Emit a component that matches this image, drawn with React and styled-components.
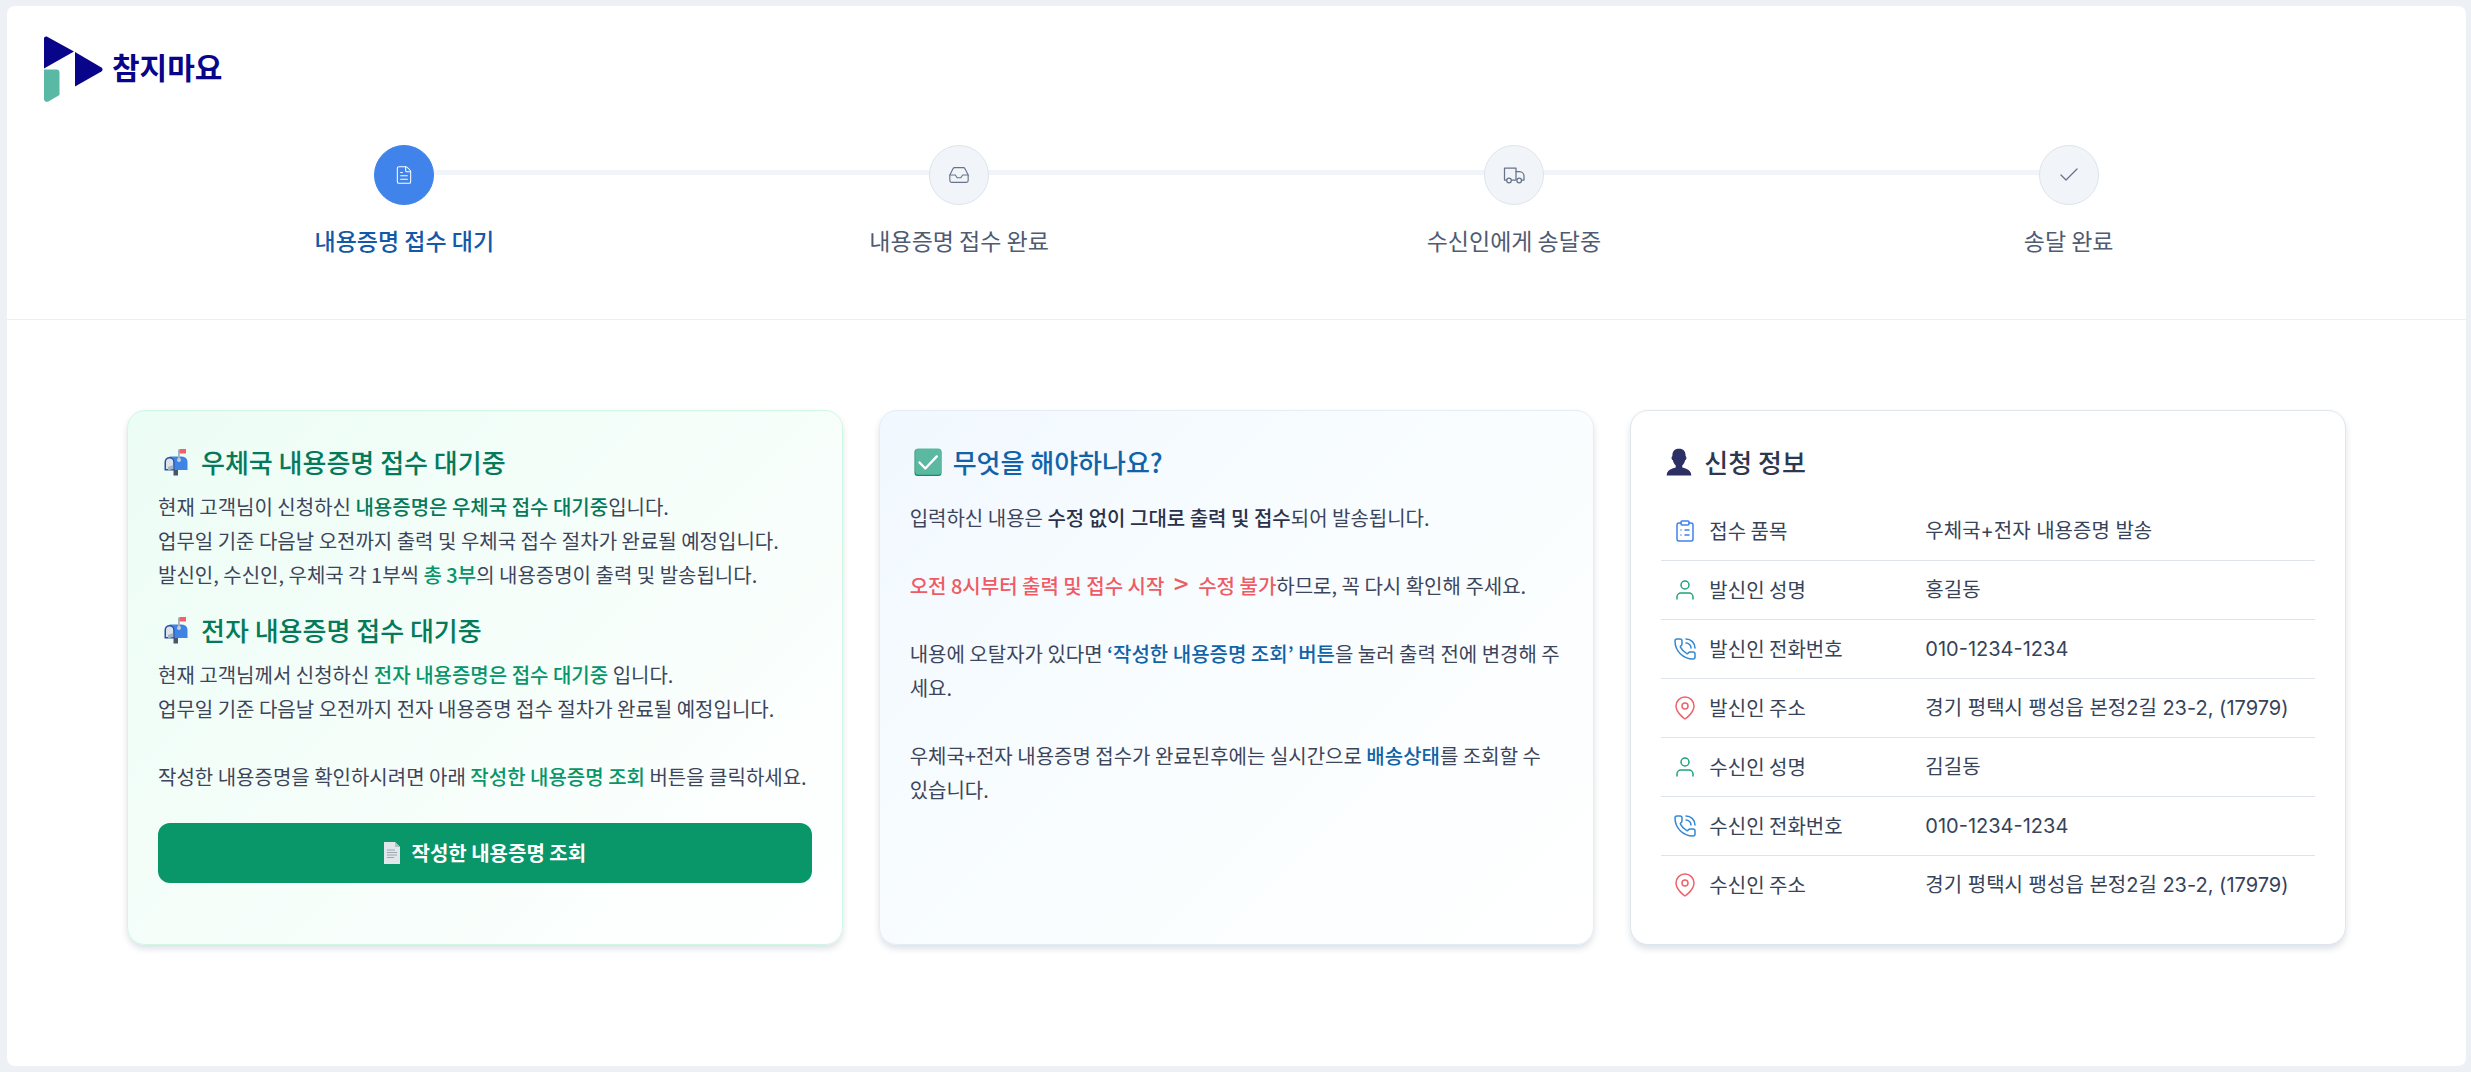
import React from "react";
import styled, { createGlobalStyle } from "styled-components";
import { Check, ClipboardList, FileText, Inbox, PhoneCall } from "lucide-react";
import { FiMapPin, FiUser } from "react-icons/fi";

const steps = [
	{ label: "내용증명 접수 대기", icon: FileText, size: 20, active: true },
	{ label: "내용증명 접수 완료", icon: Inbox, size: 22 },
	{ label: "수신인에게 송달중", icon: TruckIcon, size: 24 },
	{ label: "송달 완료", icon: Check, size: 24 },
];

const address = "경기 평택시 팽성읍 본정2길 23-2, (17979)";

const infoRows = [
	{ label: "접수 품목", value: "우체국+전자 내용증명 발송", icon: ClipboardList, color: "#3f83ea" },
	{ label: "발신인 성명", value: "홍길동", icon: FiUser, color: "#1fa37c" },
	{ label: "발신인 전화번호", value: "010-1234-1234", icon: PhoneCall, color: "#3489d0" },
	{ label: "발신인 주소", value: address, icon: FiMapPin, color: "#ee636b" },
	{ label: "수신인 성명", value: "김길동", icon: FiUser, color: "#1fa37c" },
	{ label: "수신인 전화번호", value: "010-1234-1234", icon: PhoneCall, color: "#3489d0" },
	{ label: "수신인 주소", value: address, icon: FiMapPin, color: "#ee636b" },
];

function LogoMark() {
	return (
		<svg width="60" height="66" viewBox="0 0 60 66" aria-hidden="true">
			<path d="M0 2.5C0 .6 2 0 3.6.9L30 15.6 0 32.4z" fill="#08058a" />
			<path d="M31 16l26.4 15.4c1.6 1 1.6 3 0 4L31 50.6z" fill="#08058a" />
			<path d="M0 33.4h12.5a3 3 0 0 1 3 3V59L4.4 65.4C2.4 66.4 0 65.6 0 63z" fill="#5ab9a4" />
		</svg>
	);
}

function TruckIcon({ size, strokeWidth }) {
	return (
		<svg
			width={size}
			height={size}
			viewBox="0 0 24 24"
			fill="none"
			stroke="currentColor"
			strokeWidth={strokeWidth}
			strokeLinecap="round"
			strokeLinejoin="round"
			aria-hidden="true"
		>
			<path d="M4.500 17H2.500V5H14v12H9.500" />
			<path d="M14 8.500h3.500a4.500 4.500 0 0 1 4.500 4.500v4h-2.500" />
			<circle cx="7" cy="17.500" r="2.300" />
			<circle cx="17.200" cy="17.500" r="2.300" />
		</svg>
	);
}

function MailboxIcon() {
	return (
		<svg width="24" height="28" viewBox="0 0 24 28" aria-hidden="true">
			<rect x="9.5" y="19" width="4.5" height="8.5" fill="#4c5563" />
			<path d="M5.5 8.5H18a5.5 5.5 0 0 1 5.5 5.5v8H10z" fill="#3f83e4" />
			<path d="M.5 14a5 5 0 0 1 10 0v8.5H.5z" fill="#27509f" />
			<path d="M2 14.2a3.6 3.6 0 0 1 7.2 0V21H2z" fill="#dde3ea" />
			<path d="M4 22.5l5.2-1.5v-4L4 19z" fill="#a9b3c1" />
			<path d="M14 1.5h1.8v11H14z" fill="#a8b2bf" />
			<rect x="15.5" y="1" width="6.5" height="4.5" fill="#f0616a" />
			<circle cx="15" cy="12" r="2" fill="#c6ced8" />
		</svg>
	);
}

function CheckBoxIcon() {
	return (
		<svg width="28" height="28" viewBox="0 0 28 28" aria-hidden="true">
			<rect x=".5" y="1" width="27" height="27" rx="3" fill="#178a66" />
			<rect x="1.2" y=".6" width="26" height="26.2" rx="3" fill="#5ab9a0" />
			<path d="M5.5 14.5l5.8 6L22.8 8.4" fill="none" stroke="#fff" strokeWidth="2.4" strokeLinecap="round" strokeLinejoin="round" />
		</svg>
	);
}

function PersonIcon() {
	return (
		<svg width="26" height="28" viewBox="0 0 26 28" aria-hidden="true">
			<path
				d="M13 .8c4.600 0 6.800 2.600 6.600 7.400 1.300.2 1.100 3.600-.5 4-.5 2.400-1.500 4-2.800 5v2.200c4.600 1.300 9 2.600 9 8.200H.7c0-5.600 4.400-6.900 9-8.200v-2.200c-1.300-1-2.300-2.600-2.800-5-1.600-.4-1.800-3.800-.5-4C6.200 3.400 8.400.8 13 .8z"
				fill="#2b2f63"
			/>
		</svg>
	);
}

function PageIcon() {
	return (
		<svg width="18" height="22" viewBox="0 0 18 22" aria-hidden="true">
			<path d="M1 0h11l5 5v17H1z" fill="#e1e6ea" />
			<path d="M12 0v5h5z" fill="#b3bec7" />
			<path d="M4 8h8M4 10.500h10M4 13h10M4 15.500h7" stroke="#9ba7b1" strokeWidth="1" />
		</svg>
	);
}

export default function App() {
	return (
		<>
			<GlobalStyle />
			<Page>
				<Panel>
					<Header>
						<Logo href="#">
							<LogoMark />
							<LogoText>참지마요</LogoText>
						</Logo>
						<Steps>
							{steps.map(({ label, icon: Icon, size, active }) => (
								<Step key={label} $active={active}>
									<StepCircle $active={active}>
										<Icon size={size} strokeWidth={1.25} />
									</StepCircle>
									{label}
								</Step>
							))}
						</Steps>
					</Header>
					<Cards>
						<Card $tone="green">
							<Heading $color="#047a5a">
								<HeadingIcon>
									<MailboxIcon />
								</HeadingIcon>
								우체국 내용증명 접수 대기중
							</Heading>
							<Text>
								현재 고객님이 신청하신 <Mark $color="#047a5a">내용증명은 우체국 접수 대기중</Mark>입니다.
								<br />
								업무일 기준 다음날 오전까지 출력 및 우체국 접수 절차가 완료될 예정입니다.
								<br />
								발신인, 수신인, 우체국 각 1부씩 <Mark $color="#079669">총 3부</Mark>의 내용증명이 출력 및 발송됩니다.
							</Text>
							<Heading $color="#047a5a" $spaced>
								<HeadingIcon>
									<MailboxIcon />
								</HeadingIcon>
								전자 내용증명 접수 대기중
							</Heading>
							<Text>
								현재 고객님께서 신청하신 <Mark $color="#079669">전자 내용증명은 접수 대기중</Mark> 입니다.
								<br />
								업무일 기준 다음날 오전까지 전자 내용증명 접수 절차가 완료될 예정입니다.
								<br />
								<br />
								작성한 내용증명을 확인하시려면 아래 <Mark $color="#079669">작성한 내용증명 조회</Mark> 버튼을 클릭하세요.
							</Text>
							<ViewButton type="button">
								<PageIcon />
								작성한 내용증명 조회
							</ViewButton>
						</Card>
						<Card $tone="blue">
							<Heading $color="#1163a8">
								<HeadingIcon>
									<CheckBoxIcon />
								</HeadingIcon>
								무엇을 해야하나요?
							</Heading>
							<Text $loose>
								입력하신 내용은 <Mark $color="#2a3148">수정 없이 그대로 출력 및 접수</Mark>되어 발송됩니다.
								<br />
								<br />
								<Mark $color="#ef5b64">
									오전 8시부터 출력 및 접수 시작 <Arrow>&gt;</Arrow> 수정 불가
								</Mark>
								하므로, 꼭 다시 확인해 주세요.
								<br />
								<br />
								내용에 오탈자가 있다면 <Mark $color="#1163a8">‘작성한 내용증명 조회’ 버튼</Mark>을 눌러 출력 전에 변경해 주세요.
								<br />
								<br />
								우체국+전자 내용증명 접수가 완료된후에는 실시간으로 <Mark $color="#1163a8">배송상태</Mark>를 조회할 수 있습니다.
							</Text>
						</Card>
						<Card>
							<Heading $color="#2d3850">
								<HeadingIcon>
									<PersonIcon />
								</HeadingIcon>
								신청 정보
							</Heading>
							<InfoTable>
								<tbody>
									{infoRows.map(({ label, value, icon: Icon, color }) => (
										<tr key={label}>
											<th scope="row">
												<InfoLabel>
													<Icon size={24} color={color} strokeWidth={1.5} />
													{label}
												</InfoLabel>
											</th>
											<td>{value}</td>
										</tr>
									))}
								</tbody>
							</InfoTable>
						</Card>
					</Cards>
				</Panel>
			</Page>
		</>
	);
}

const GlobalStyle = createGlobalStyle`
	* {
		box-sizing: border-box;
	}
	body {
		margin: 0;
		background: #edf1f6;
		color: #3d455b;
		font-family: "Noto Sans CJK KR", "Noto Sans", sans-serif;
		font-size: 20px;
		line-height: 34px;
	}
`;

const Page = styled.div`
	display: flex;
	min-height: 100vh;
	padding: 6px 5px 6px 7px;
`;

const Panel = styled.main`
	flex: 1;
	min-width: 0;
	background: #fff;
	border-radius: 8px;
`;

const Header = styled.header`
	padding: 30px 0 62px;
	border-bottom: 1px solid #edf0f3;
`;

const Logo = styled.a`
	display: flex;
	align-items: center;
	gap: 8px;
	width: fit-content;
	margin-left: 37px;
	color: #08058a;
	font-size: 30px;
	font-weight: 700;
	text-decoration: none;
`;

const LogoText = styled.span`
	padding-bottom: 6px;
`;

const Steps = styled.ol`
	display: grid;
	grid-template-columns: repeat(4, 1fr);
	list-style: none;
	margin: 43px 0 0;
	padding: 0 120px;
`;

const Step = styled.li`
	position: relative;
	display: flex;
	flex-direction: column;
	align-items: center;
	gap: 18px;
	color: ${({ $active }) => ($active ? "#1259a8" : "#4f5b70")};
	font-size: 23px;
	font-weight: ${({ $active }) => ($active ? 500 : 400)};

	/* connector to the next circle */
	&:not(:last-child)::after {
		content: "";
		position: absolute;
		top: 25px;
		left: 50%;
		width: 100%;
		height: 5px;
		background: #f1f5f9;
	}
`;

const StepCircle = styled.span`
	position: relative;
	z-index: 1;
	display: flex;
	align-items: center;
	justify-content: center;
	width: 60px;
	height: 60px;
	border: 1px solid ${({ $active }) => ($active ? "#4083ea" : "#dde4eb")};
	border-radius: 50%;
	background: ${({ $active }) => ($active ? "#4083ea" : "#f1f5f9")};
	color: ${({ $active }) => ($active ? "#fff" : "#667389")};
`;

const Cards = styled.div`
	display: grid;
	grid-template-columns: repeat(3, 1fr);
	gap: 36px;
	padding: 90px 120px;
`;

const tones = {
	green: { border: "#d0f7e4", background: "linear-gradient(135deg, #ecfdf5, #fff)" },
	blue: { border: "#e4edf5", background: "linear-gradient(135deg, #f1f8ff, #f9fdff 50%, #fff)" },
	plain: { border: "#dfe6ed", background: "#fff" },
};

const Card = styled.section`
	padding: 30px;
	border: 1px solid ${({ $tone = "plain" }) => tones[$tone].border};
	border-radius: 18px;
	background: ${({ $tone = "plain" }) => tones[$tone].background};
	box-shadow: 0 4px 6px rgba(51, 75, 105, 0.16);
`;

const Heading = styled.h2`
	display: flex;
	align-items: center;
	gap: 7px;
	margin: ${({ $spaced }) => ($spaced ? "17px" : "0")} 0 0;
	color: ${({ $color }) => $color};
	font-size: 26px;
	font-weight: 500;
	line-height: 42px;
`;

const HeadingIcon = styled.span`
	display: flex;
	justify-content: center;
	width: 36px;
`;

const Text = styled.p`
	margin: ${({ $loose }) => ($loose ? "18px" : "7px")} 0 0;
`;

const Mark = styled.strong`
	color: ${({ $color }) => $color};
	font-weight: 500;
`;

const Arrow = styled.span`
	margin: 0 5px;
	font-size: 26px;
	line-height: 1;
`;

const ViewButton = styled.button`
	display: flex;
	align-items: center;
	justify-content: center;
	gap: 10px;
	width: 100%;
	height: 60px;
	margin-top: 29px;
	border: 0;
	border-radius: 12px;
	background: #099669;
	color: #fff;
	font: inherit;
	font-weight: 700;
	cursor: pointer;
`;

const InfoTable = styled.table`
	width: 100%;
	margin-top: 19px;
	border-collapse: collapse;
	table-layout: fixed;
	color: #364359;

	th,
	td {
		padding: 12px 0;
		font-weight: 400;
		text-align: left;
	}
	th {
		width: 264px;
		padding-left: 12px;
	}
	td {
		font-family: Inter, "Noto Sans CJK KR", sans-serif;
	}
	tr:not(:last-child) > * {
		border-bottom: 1px solid #dfe4ea;
	}
`;

const InfoLabel = styled.span`
	display: flex;
	align-items: center;
	gap: 12px;
`;
